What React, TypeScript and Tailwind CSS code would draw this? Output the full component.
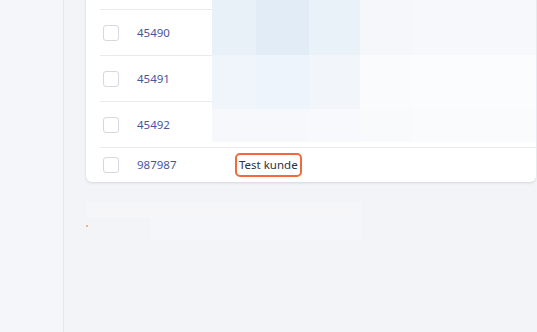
const rows = ['45490', '45491', '45492'];

// pixelated redaction tiles: [width, colours per row]
const blurCols = [44, 53, 51, 52, 124];
const blurRows: { h: number; colors: string[] }[] = [
  { h: 55, colors: ['#e8f0f8', '#e2ecf6', '#e9f1f9', '#f5f7fb', '#f7f8fb'] },
  { h: 54, colors: ['#f0f5fb', '#edf4fb', '#f2f6fb', '#fafbfd', '#fbfcfd'] },
  { h: 33, colors: ['#f6f8fb', '#f6f8fb', '#f7f9fc', '#f9fafc', '#fafbfd'] },
];

function Checkbox() {
  return <div className="w-4 h-4 rounded-[3px] border border-[#d5d8e0] bg-white" />;
}

export default function App() {
  return (
    <div
      className="flex w-[537px] h-[332px] overflow-hidden bg-[#f3f4f8]"
      style={{ fontFamily: '"Noto Sans", "Open Sans", sans-serif' }}
    >
      <aside className="w-[64px] shrink-0 bg-[#f5f6fa] border-r border-[#e6e8ee]" />

      <main className="flex-1 pl-[22px]">
        <div className="relative w-[450px] -mt-[36px] bg-white rounded-md shadow-[0_1px_3px_rgba(0,0,0,0.12)]">
          <div className="pl-[14px]">
            <div className="h-[46px] border-b border-[#e8eaef]" />
            {rows.map((id) => (
              <div key={id} className="flex items-center h-[46px] border-b border-[#e8eaef]">
                <div className="w-[37px] pl-[3px]">
                  <Checkbox />
                </div>
                <span className="text-[11.5px] text-[#4a5699]">{id}</span>
              </div>
            ))}
            <div className="flex items-center h-[34px]">
              <div className="w-[37px] pl-[3px]">
                <Checkbox />
              </div>
              <span className="w-[98px] text-[11.5px] text-[#4a5699]">987987</span>
              <span className="px-[2px] py-[2px] border-2 border-[#f26a3a] rounded-[5px] text-[11.5px] leading-[16px] text-[#2d3142]">
                Test kunde
              </span>
            </div>
          </div>

          {/* redacted area */}
          <div className="absolute left-[126px] top-[36px] flex flex-col">
            {blurRows.map((r, ri) => (
              <div key={ri} className="flex" style={{ height: r.h }}>
                {blurCols.map((w, ci) => (
                  <div key={ci} style={{ width: w, background: r.colors[ci] }} />
                ))}
              </div>
            ))}
          </div>
        </div>

        <div className="mt-[21px] w-[276px] h-[15px] bg-[#f6f6f9]" />
        <div className="flex">
          <div className="w-[64px] h-[22px] relative">
            <div className="absolute left-0 top-[7px] w-[2px] h-[2px] bg-[#f0b48a]" />
          </div>
          <div className="w-[212px] h-[22px] bg-[#f5f6f9]" />
        </div>
      </main>
    </div>
  );
}
